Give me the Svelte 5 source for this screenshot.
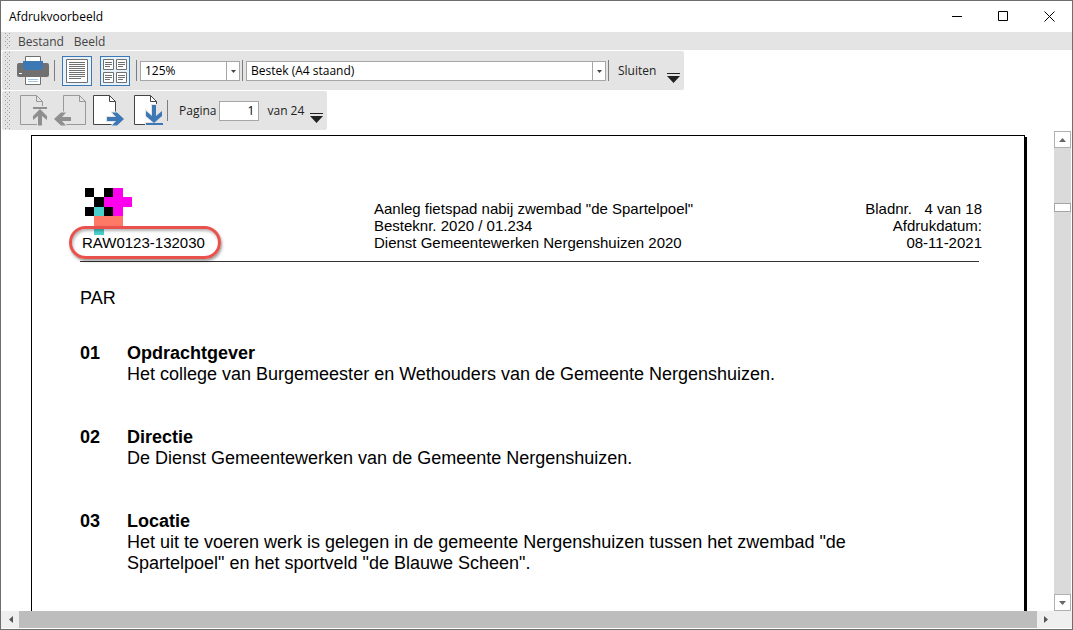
<script lang="ts">
    const logo = [
        { x: 0, y: 0, w: 1, h: 1, color: "#000" },
        { x: 2, y: 0, w: 1, h: 1, color: "#000" },
        { x: 1, y: 1, w: 1, h: 1, color: "#000" },
        { x: 0, y: 2, w: 1, h: 1, color: "#000" },
        { x: 3, y: 0, w: 1, h: 3, color: "#f0e" },
        { x: 2, y: 1, w: 3, h: 1, color: "#f0e" },
        { x: 2, y: 2, w: 1, h: 1, color: "#000" },
        { x: 1, y: 2, w: 1, h: 1, color: "#48d1cc" },
        { x: 1, y: 3, w: 3, h: 1, color: "#ff7a66" },
        { x: 1, y: 4, w: 1, h: 1, color: "#48d1cc" },
    ];

    const sections = [
        {
            nr: "01",
            title: "Opdrachtgever",
            text: "Het college van Burgemeester en Wethouders van de Gemeente Nergenshuizen.",
        },
        {
            nr: "02",
            title: "Directie",
            text: "De Dienst Gemeentewerken van de Gemeente Nergenshuizen.",
        },
        {
            nr: "03",
            title: "Locatie",
            text: 'Het uit te voeren werk is gelegen in de gemeente Nergenshuizen tussen het zwembad "de Spartelpoel" en het sportveld "de Blauwe Scheen".',
        },
    ];

    let zoom = $state("125%");
    let layout = $state("Bestek (A4 staand)");
    let page = $state("1");
</script>

{#snippet grip()}
    <span class="grip"></span>
{/snippet}

{#snippet overflow()}
    <button class="overflow" aria-label="Meer knoppen">
        <svg width="13" height="10"><path d="M0 0h13v1H0zM0 3h13L6.5 10z" fill="#222" /></svg>
    </button>
{/snippet}

{#snippet sheet(stroke: string, fill: string, x: number)}
    <path d="M{x}.5 .5h16l6 6v23h-22z" {fill} {stroke} />
    <path d="M{x + 16}.5 .5v6h6" fill="none" {stroke} />
{/snippet}

<div class="window">
    <header class="titlebar">
        <h1>Afdrukvoorbeeld</h1>
        <div class="controls">
            <button aria-label="Minimaliseren">
                <svg width="11" height="11"><path d="M0 5.5h10" stroke="#000" /></svg>
            </button>
            <button aria-label="Maximaliseren">
                <svg width="11" height="11"><path d="M.5 .5h9v9h-9z" fill="none" stroke="#000" /></svg>
            </button>
            <button aria-label="Sluiten">
                <svg width="11" height="11"><path d="M.5 .5l10 10M10.5 .5l-10 10" stroke="#000" /></svg>
            </button>
        </div>
    </header>

    <nav class="menubar">
        {@render grip()}
        <button>Bestand</button>
        <button>Beeld</button>
    </nav>

    <div class="toolbar">
        {@render grip()}
        <button class="print" aria-label="Afdrukken">
            <svg width="32" height="30">
                <path d="M2 7h28q2 0 2 2v10q0 2-2 2H2q-2 0-2-2V9q0-2 2-2z" fill="#707070" />
                <path d="M8.5 6V.5h15V6" fill="#fff" stroke="#707070" />
                <path d="M6 5h20v7l-2 2H8l-2-2z" fill="#3c78b4" />
                <path d="M2 17h3v1H2z" fill="#fff" />
                <path d="M8.5 20.5h15v8h-15z" fill="#fff" stroke="#707070" />
                <path d="M11 23.5h10M11 25.5h10" stroke="#9fc3e4" />
            </svg>
        </button>
        <span class="sep"></span>
        <button class="view" aria-label="Eén pagina" aria-pressed="true">
            <svg width="22" height="24">
                <path d="M.5 .5h21v23H.5z" fill="#fff" stroke="#707070" />
                <path
                    d="M3 3.5h16M3 5.5h16M3 7.5h16M3 9.5h16M3 11.5h16M3 13.5h16M3 15.5h16M3 17.5h16M3 19.5h12"
                    stroke="#707070"
                />
            </svg>
        </button>
        <button class="view" aria-label="Meerdere pagina's" aria-pressed="true">
            <svg width="24" height="24">
                {#each [[0, 0], [13, 0], [0, 13], [13, 13]] as [x, y]}
                    <g transform="translate({x} {y})">
                        <path d="M.5 .5h10v10H.5z" fill="#fff" stroke="#707070" />
                        <path d="M2 3.5h7M2 5.5h7M2 7.5h5" stroke="#707070" />
                    </g>
                {/each}
            </svg>
        </button>
        <span class="sep"></span>
        <span class="combo zoom">
            <select aria-label="Zoom" bind:value={zoom}>
                <option>125%</option>
            </select>
            <svg width="5" height="3"><path d="M0 0h5L2.5 3z" fill="#444" /></svg>
        </span>
        <span class="sep"></span>
        <span class="combo layout">
            <select aria-label="Indeling" bind:value={layout}>
                <option>Bestek (A4 staand)</option>
            </select>
            <svg width="5" height="3"><path d="M0 0h5L2.5 3z" fill="#444" /></svg>
        </span>
        <span class="sep"></span>
        <button class="close">Sluiten</button>
        {@render overflow()}
    </div>

    <div class="toolbar pager">
        {@render grip()}
        <button class="nav" aria-label="Eerste pagina" disabled>
            <svg width="34" height="32">
                {@render sheet("#999", "none", 3)}
                <path
                    class="arrow off"
                    d="M16 12h14v2H16zM21 30.5V21l-5 4v-4l7-7 7 7v4l-5-4v9.5z"
                />
            </svg>
        </button>
        <button class="nav" aria-label="Vorige pagina" disabled>
            <svg width="34" height="32">
                {@render sheet("#999", "none", 9)}
                <path class="arrow off" d="M17 22v4H8l4 4.5H7L0 24l7-6.5h5L8 22z" />
            </svg>
        </button>
        <button class="nav" aria-label="Volgende pagina">
            <svg width="34" height="32">
                {@render sheet("#444", "#fff", 2)}
                <path class="arrow" d="M16 22v4h9l-4 4.5h5L33 24l-7-6.5h-5l4 4.5z" />
            </svg>
        </button>
        <button class="nav last" aria-label="Laatste pagina">
            <svg width="34" height="32">
                {@render sheet("#444", "#fff", 3)}
                <path class="arrow" d="M15 28h17v2H15zM21 10h4v11l6-5v5l-8 7-8-7v-5l6 5z" />
            </svg>
        </button>
        <span class="sep"></span>
        <label for="page">Pagina</label>
        <input id="page" type="text" bind:value={page} />
        <span class="total">van 24</span>
        {@render overflow()}
    </div>

    <div class="body">
        <main>
            <article class="page">
                <div class="page-head">
                    <div class="brand">
                        <svg width="47" height="47" viewBox="0 0 5 5" shape-rendering="crispEdges">
                            {#each logo as c}
                                <rect x={c.x} y={c.y} width={c.w} height={c.h} fill={c.color} />
                            {/each}
                        </svg>
                        <p class="code">RAW0123-132030</p>
                    </div>
                    <p>
                        Aanleg fietspad nabij zwembad "de Spartelpoel"<br />
                        Besteknr. 2020 / 01.234<br />
                        Dienst Gemeentewerken Nergenshuizen 2020
                    </p>
                    <p class="meta">
                        Bladnr. &nbsp; 4 van 18<br />
                        Afdrukdatum:<br />
                        08-11-2021
                    </p>
                </div>
                <p class="par">PAR</p>
                {#each sections as s}
                    <section>
                        <span class="nr">{s.nr}</span>
                        <div>
                            <h2>{s.title}</h2>
                            <p>{s.text}</p>
                        </div>
                    </section>
                {/each}
            </article>
        </main>
        <div class="vscroll">
            <button aria-label="Omhoog">
                <svg width="7" height="4"><path d="M0 4h7L3.5 0z" fill="#666" /></svg>
            </button>
            <div class="track"><div class="thumb"></div></div>
            <button aria-label="Omlaag">
                <svg width="7" height="4"><path d="M0 0h7L3.5 4z" fill="#666" /></svg>
            </button>
        </div>
    </div>

    <div class="hscroll">
        <button aria-label="Naar links">
            <svg width="4" height="7"><path d="M4 0v7L0 3.5z" fill="#555" /></svg>
        </button>
        <div class="thumb"></div>
        <button aria-label="Naar rechts">
            <svg width="4" height="7"><path d="M0 0v7l4-3.5z" fill="#555" /></svg>
        </button>
    </div>
</div>

<style>
    :global(body) {
        margin: 0;
    }

    .window {
        display: flex;
        flex-direction: column;
        height: 100vh;
        box-sizing: border-box;
        border: 1px solid #6e6e6e;
        padding-bottom: 1px;
        background: #fff;
        color: #222;
        font: 12px/16px "Open Sans", "Noto Sans", sans-serif;
        overflow: hidden;
    }

    button,
    input,
    select {
        font: inherit;
        color: inherit;
        margin: 0;
        padding: 0;
        border: 0;
        border-radius: 0;
        background: none;
    }

    svg {
        display: block;
    }

    h1,
    h2,
    p {
        margin: 0;
        font-size: inherit;
    }

    .titlebar {
        display: flex;
        justify-content: space-between;
        align-items: center;
        height: 31px;
        flex-shrink: 0;
        padding-left: 8px;
        color: #000;
    }

    .titlebar h1 {
        font-weight: 400;
    }

    .controls {
        display: flex;
    }

    .controls button {
        display: grid;
        place-items: center;
        width: 46px;
        height: 28px;
    }

    .menubar {
        display: flex;
        align-items: center;
        height: 18px;
        flex-shrink: 0;
        padding-left: 4px;
        background: #e4e4e4;
        color: #444;
    }

    .menubar button {
        padding-top: 2px;
        margin-right: 10px;
    }

    /* two offset dot grids, one pixel per dot */
    .grip {
        width: 5px;
        align-self: stretch;
        margin: 1px 8px 1px 0;
        background:
            conic-gradient(from 270deg at 1px 1px, #a0a0a0 90deg, transparent 0) 0 0 / 4px 4px,
            conic-gradient(from 270deg at 1px 1px, #a0a0a0 90deg, transparent 0) 2px 2px / 4px 4px;
    }

    .toolbar {
        display: flex;
        align-items: center;
        align-self: flex-start;
        height: 39px;
        flex-shrink: 0;
        box-sizing: border-box;
        margin: 1px 0 0 1px;
        padding: 0 4px 0 3px;
        border-radius: 2px;
        background: #e4e4e4;
    }

    .toolbar .grip {
        margin-right: 7px;
    }

    .sep {
        width: 1px;
        height: 21px;
        background: #7d7d7d;
    }

    .print {
        margin-right: 5px;
    }

    .view {
        display: grid;
        place-items: center;
        width: 30px;
        height: 30px;
        margin-left: 7px;
        border: 1px solid #3c78b4;
        background: #e7f1fa;
    }

    .view + .view {
        margin-left: 8px;
    }

    .view + .sep {
        margin-left: 6px;
    }

    .combo {
        position: relative;
        height: 20px;
        margin: 0 2px 0 3px;
        background: #fff;
    }

    .combo select {
        appearance: none;
        width: 100%;
        height: 100%;
        box-sizing: border-box;
        padding: 0 18px 0 4px;
        border: 1px solid #a6a6a6;
        color: #000;
        background: linear-gradient(#a6a6a6, #a6a6a6) right 12px top / 1px 100% no-repeat #fff;
    }

    .combo svg {
        position: absolute;
        right: 4px;
        top: 9px;
        pointer-events: none;
    }

    .combo.zoom {
        width: 100px;
    }

    .combo.layout {
        width: 360px;
    }

    .close {
        margin: 0 11px 0 9px;
    }

    .overflow {
        align-self: flex-end;
        margin-bottom: 7px;
    }

    .nav {
        margin-right: 3px;
    }

    .nav.last {
        margin: 0 2px 0 3px;
    }

    .arrow {
        fill: #3c78b4;
        stroke: #e4e4e4;
        stroke-width: 2px;
        paint-order: stroke;
    }

    .arrow.off {
        fill: #8f8f8f;
    }

    .pager .sep {
        margin: 0 11px 0 0;
    }

    .pager input {
        width: 40px;
        height: 20px;
        box-sizing: border-box;
        margin: 0 8px 0 3px;
        padding: 0 4px;
        border: 1px solid #a6a6a6;
        background: #fff;
        color: #000;
        text-align: right;
    }

    .total {
        margin-right: 6px;
    }

    .body {
        display: flex;
        flex: 1;
        min-height: 0;
        padding-right: 1px;
    }

    main {
        flex: 1;
        min-width: 0;
        padding: 5px 29px 0 30px;
        overflow: hidden;
    }

    .page {
        min-height: 200vh;
        box-sizing: border-box;
        padding: 52px 45px 0 48px;
        border: 1px solid #000;
        box-shadow: 2px 2px 0 #000;
        background: #fff;
        color: #000;
        font: 18px/21px "Liberation Sans", Arial, sans-serif;
    }

    .page-head {
        display: grid;
        grid-template-columns: 294px 1fr auto;
        align-items: end;
        padding-bottom: 10px;
        border-bottom: 1px solid #333;
        font-size: 15px;
        line-height: 17px;
    }

    .brand {
        padding-left: 2px;
    }

    .brand svg {
        margin: 0 0 -1px 3px;
    }

    .code {
        position: relative;
        width: max-content;
    }

    .code::after {
        content: "";
        position: absolute;
        inset: -8px -16px -8px -13px;
        border: 3px solid #e9524c;
        border-radius: 18px;
        box-shadow:
            1px 2px 3px rgba(0, 0, 0, 0.4),
            inset 1px 2px 3px rgba(0, 0, 0, 0.3);
    }

    .meta {
        margin-right: -3px;
        text-align: right;
    }

    .par {
        margin: 26px 0 34px;
    }

    section {
        display: grid;
        grid-template-columns: 47px 1fr;
        margin-bottom: 42px;
        padding-right: 60px;
    }

    .nr,
    h2 {
        font-weight: 700;
    }

    .vscroll {
        display: flex;
        flex-direction: column;
        width: 17px;
        padding-top: 1px;
    }

    .vscroll button {
        display: grid;
        place-items: center;
        width: 17px;
        height: 17px;
        border: 1px solid #b0b0b0;
        background: #fff;
    }

    .vscroll .track {
        flex: 1;
        padding-top: 55px;
        background: #dadada;
    }

    .vscroll .thumb {
        height: 9px;
        box-sizing: border-box;
        border: 1px solid #a6a6a6;
        background: #fff;
    }

    .hscroll {
        display: flex;
        height: 17px;
        flex-shrink: 0;
        padding: 0 18px 0 1px;
        background: #efefef;
    }

    .hscroll button {
        display: grid;
        place-items: center;
        width: 17px;
    }

    .hscroll .thumb {
        flex: 1;
        background: #bdbdbd;
    }
</style>
